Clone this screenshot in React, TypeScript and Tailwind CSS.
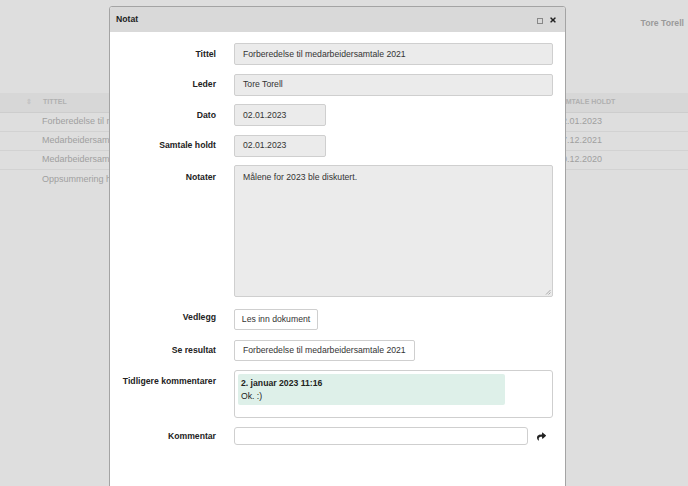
import { FaShare, FaTimes } from "react-icons/fa";

const ROWS = [
  { title: "Forberedelse til medarbeidersamtale 2021", held: "02.01.2023" },
  { title: "Medarbeidersamtale 2021", held: "17.12.2021" },
  { title: "Medarbeidersamtale 2020", held: "10.12.2020" },
  { title: "Oppsummering høsten 2020", held: "" },
];

const inputCls =
  "h-[22px] rounded-[2px] border border-[#cfcfcf] bg-[#ebebeb] px-[8px] flex items-center text-[#333]";

export default function App() {
  return (
    <div
      className="relative h-[486px] w-[688px] overflow-hidden bg-[#dedede] text-[8.67px]"
      style={{ fontFamily: '"Liberation Sans", Arial, sans-serif' }}
    >
      {/* Page behind the dialog */}
      <div className="flex justify-end pt-[17px] pr-[4px] font-bold text-[#9a9a9a]">
        Tore Torell
      </div>
      <div className="mt-[63px]">
        <div className="grid h-[20px] grid-cols-[32px_524px_1fr] items-center border-b border-[#cdcdcd] bg-[#d7d7d7] text-[7px] font-bold uppercase text-[#b0b0b0]">
          <span className="text-right text-[#c4c4c4]">⇕</span>
          <span className="pl-[11px]">Tittel</span>
          <span>Samtale holdt</span>
        </div>
        {ROWS.map((r) => (
          <div
            key={r.title}
            className="grid h-[19px] grid-cols-[32px_525px_1fr] items-center border-b border-[#d2d2d2] text-[9px] text-[#a0a0a0] last:border-b-0"
          >
            <span />
            <span className="w-[77px] overflow-hidden whitespace-nowrap pl-[10px]">{r.title}</span>
            <span>{r.held}</span>
          </div>
        ))}
      </div>

      {/* Dialog */}
      <div className="absolute left-[109px] top-[6px] -bottom-[10px] w-[457px] overflow-hidden rounded-t-[3px] border border-[#a4a4a4] bg-white">
        <div className="flex h-[25px] items-center justify-between bg-[#d9d9d9] pl-[6px] pr-[8px]">
          <span className="font-bold text-[#222]">Notat</span>
          <div className="flex items-center gap-[6px]">
            <span className="mt-[2px] block h-[6px] w-[6px] border border-[#888]" />
            <FaTimes className="text-[#222]" size={8} />
          </div>
        </div>

        <div className="flex flex-col pt-[11px] pr-[12px] text-[#333]">
          <Row label="Tittel">
            <div className={`${inputCls} w-full`}>Forberedelse til medarbeidersamtale 2021</div>
          </Row>
          <Row label="Leder" className="mt-[8.5px]">
            <div className={`${inputCls} w-full`}>Tore Torell</div>
          </Row>
          <Row label="Dato" className="mt-[8.5px]">
            <div className={`${inputCls} w-[92px]`}>02.01.2023</div>
          </Row>
          <Row label="Samtale holdt" className="mt-[8.5px]">
            <div className={`${inputCls} w-[92px]`}>02.01.2023</div>
          </Row>
          <Row label="Notater" className="mt-[8.5px]" labelPad="pt-[6px]">
            <div className="relative h-[132px] w-full rounded-[2px] border border-[#cfcfcf] bg-[#ebebeb] px-[8px] pt-[5px] text-[#333]">
              Målene for 2023 ble diskutert.
              <svg className="absolute bottom-[1px] right-[1px]" width="6" height="6" viewBox="0 0 6 6">
                <path d="M1 5.5 L5.5 1 M3.5 5.5 L5.5 3.5" stroke="#999" strokeWidth="0.8" />
              </svg>
            </div>
          </Row>
          <Row label="Vedlegg" className="mt-[12px]" labelPad="pt-[2px]">
            <div className="flex h-[21px] w-[84px] items-center justify-center rounded-[2px] border border-[#cfcfcf] bg-white">
              Les inn dokument
            </div>
          </Row>
          <Row label="Se resultat" className="mt-[10px]">
            <div className="flex h-[21px] items-center rounded-[2px] border border-[#cfcfcf] bg-white px-[8px]">
              Forberedelse til medarbeidersamtale 2021
            </div>
          </Row>
          <Row label="Tidligere kommentarer" className="mt-[9px]" labelPad="pt-[5px]">
            <div className="h-[48px] w-full rounded-[3px] border border-[#cfcfcf] bg-white p-[3px]">
              <div className="w-[267px] rounded-[2px] bg-[#def0e9] px-[3px] pt-[3px] pb-[2px] leading-[13px] text-[#222]">
                <div className="font-bold">2. januar 2023 11:16</div>
                <div>Ok. :)</div>
              </div>
            </div>
          </Row>
          <Row label="Kommentar" className="mt-[9px]">
            <div className="flex w-full items-center gap-[9px]">
              <div className="h-[18px] w-[294px] rounded-[3px] border border-[#cfcfcf] bg-white" />
              <FaShare className="text-[#222]" size={9} />
            </div>
          </Row>
        </div>
      </div>
    </div>
  );
}

function Row({
  label,
  children,
  className = "",
  labelPad = "",
}: {
  label: string;
  children: React.ReactNode;
  className?: string;
  labelPad?: string;
}) {
  return (
    <div className={`flex ${labelPad ? "items-start" : "items-center"} ${className}`}>
      <div className={`w-[106px] shrink-0 text-right font-bold text-[#222] ${labelPad}`}>{label}</div>
      <div className="ml-[18px] flex flex-1">{children}</div>
    </div>
  );
}
